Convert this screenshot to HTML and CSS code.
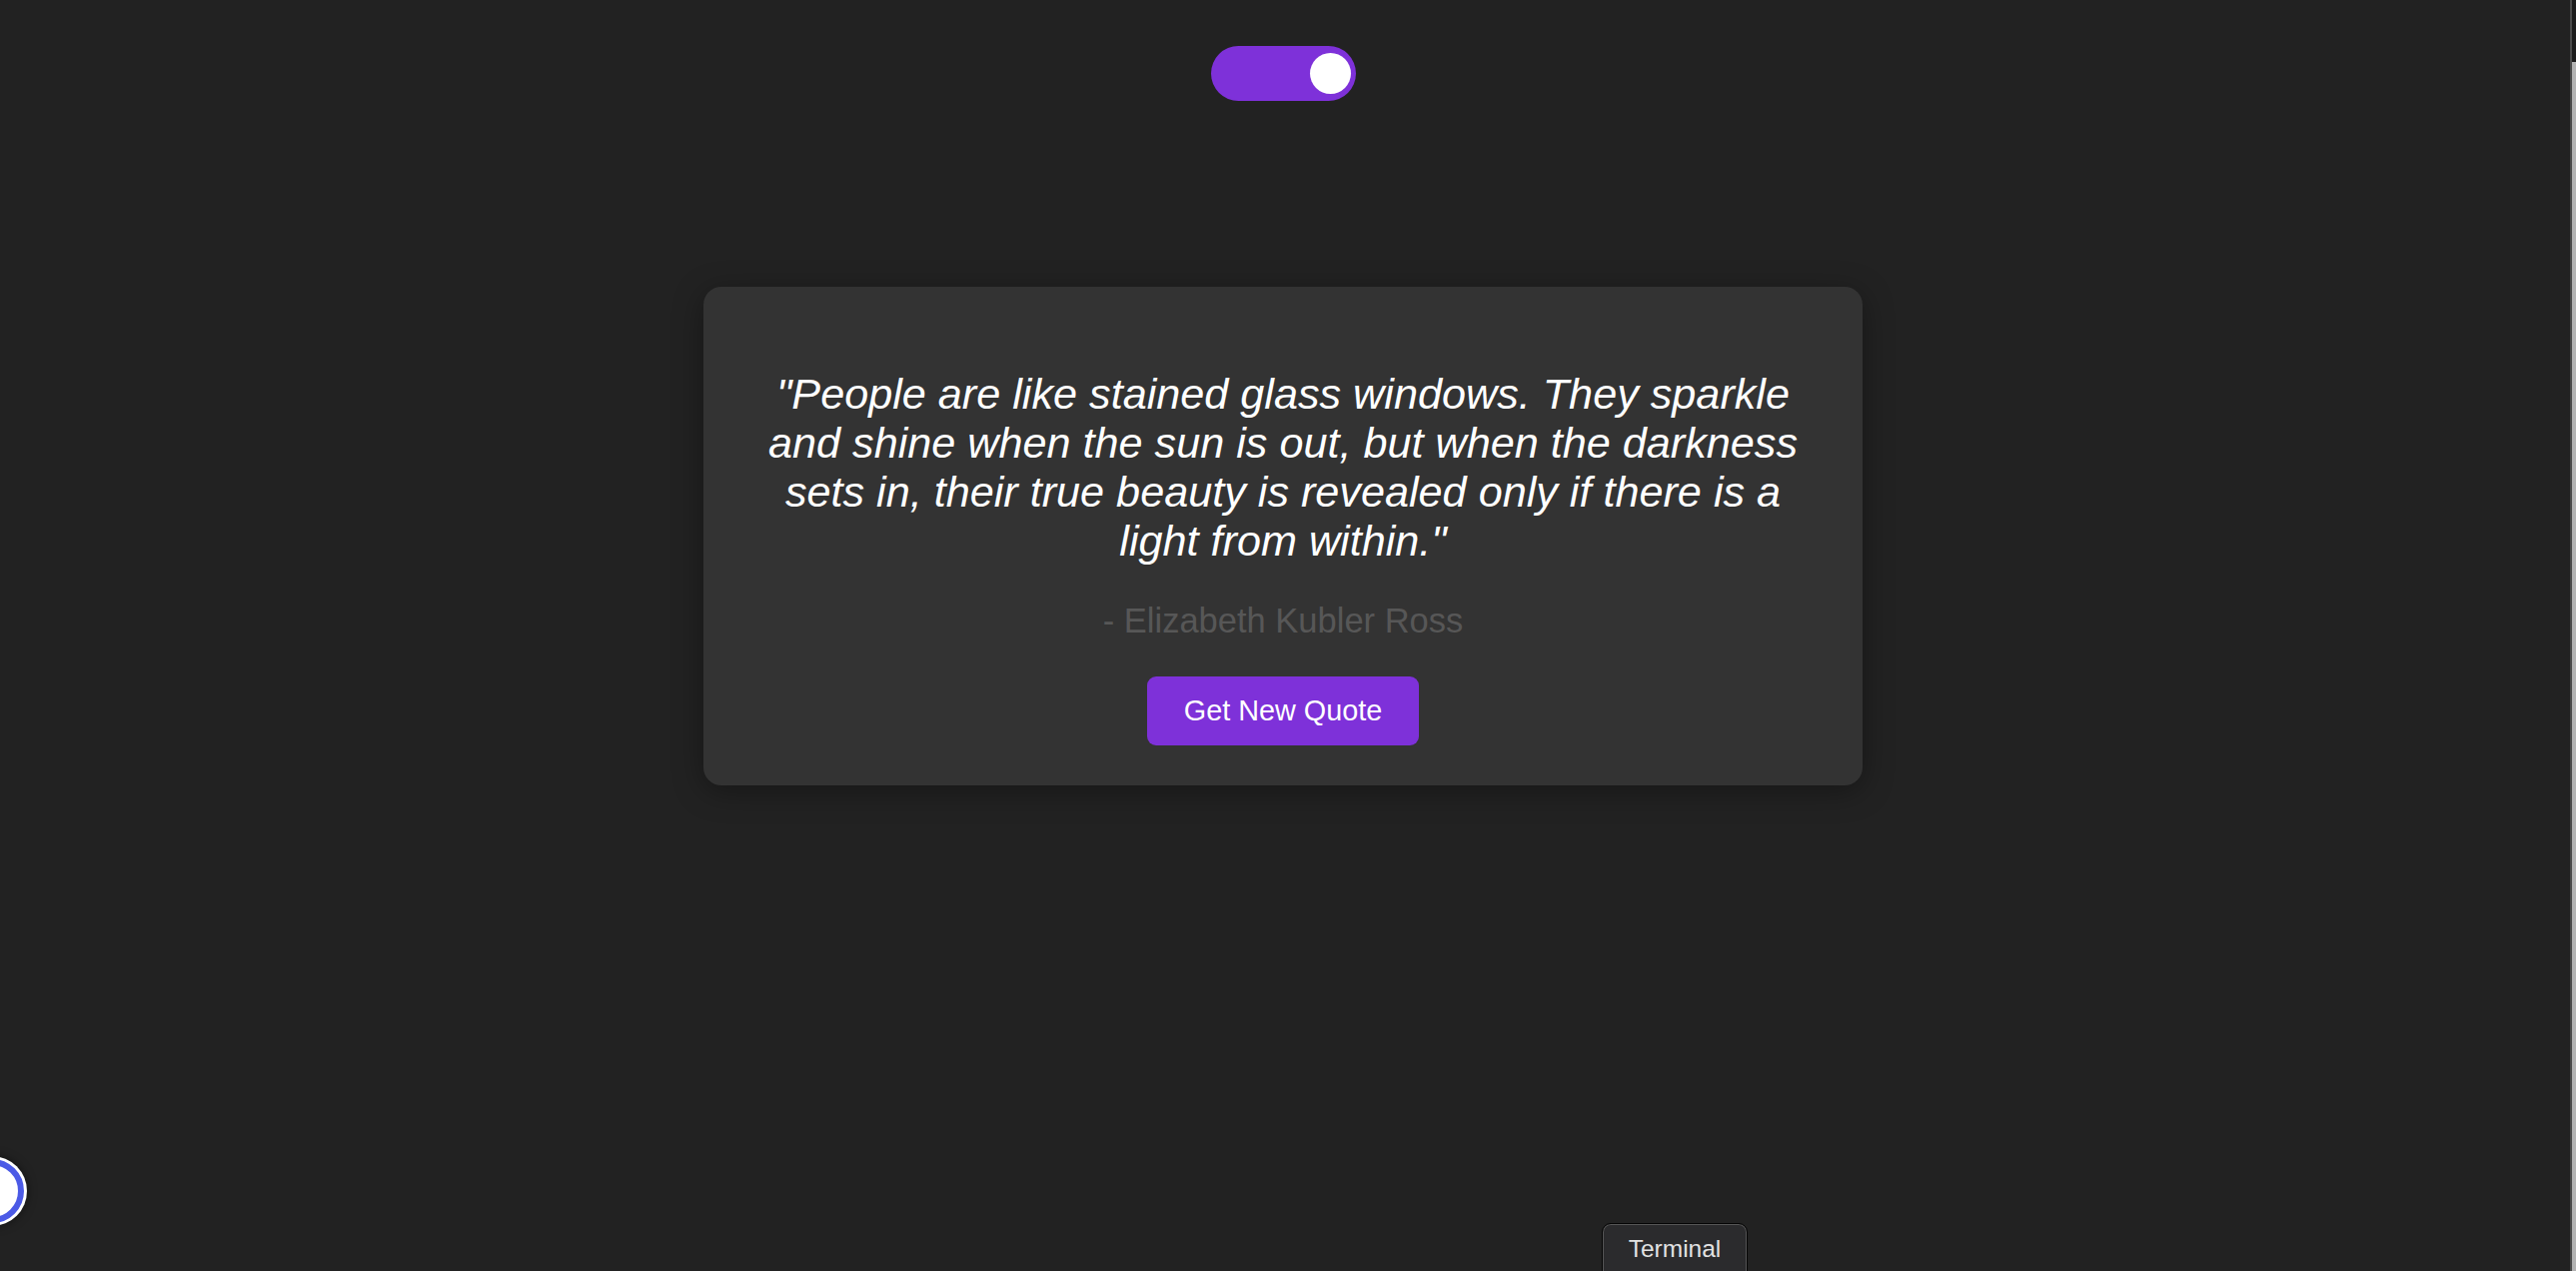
FILE: index.html
```html
<!DOCTYPE html>
<html lang="en">
<head>
<meta charset="utf-8">
<title>Quote Generator</title>
<link rel="stylesheet" href="styles.css">
</head>
<body>
<div class="page">
  <div class="toggle"><span class="knob"></span></div>
  <div class="card">
    <p class="quote">"People are like stained glass windows. They sparkle and shine when the sun is out, but when the darkness sets in, their true beauty is revealed only if there is a light from within."</p>
    <p class="author">- Elizabeth Kubler Ross</p>
    <button class="btn">Get New Quote</button>
  </div>
</div>
<div class="scrollbar"><div class="scroll-top"></div><div class="scroll-thumb"></div></div>
<div class="fab"></div>
<div class="tooltip">Terminal</div>
</body>
</html>
```
FILE: styles.css
```css
html, body {
  margin: 0;
  height: 100%;
}
body {
  background: #222222;
  font-family: "Liberation Sans", Arial, sans-serif;
  display: flex;
  overflow: hidden;
}
.page {
  flex: 1;
  display: flex;
  flex-direction: column;
  align-items: center;
}
.toggle {
  margin-top: 46px;
  width: 145px;
  height: 55px;
  border-radius: 28px;
  background: #7e31d9;
  display: flex;
  align-items: center;
  justify-content: flex-end;
  padding-right: 5px;
  box-sizing: border-box;
}
.knob {
  width: 41px;
  height: 41px;
  border-radius: 50%;
  background: #ffffff;
}
.card {
  margin-top: 186px;
  width: 1160px;
  box-sizing: border-box;
  padding: 83px 58px 40px;
  background: #333333;
  border-radius: 18px;
  box-shadow: 0 6px 30px rgba(0, 0, 0, 0.35);
  text-align: center;
}
.quote {
  margin: 0 0 36px;
  font-size: 43.2px;
  font-style: italic;
  color: #ffffff;
}
.author {
  margin: 0 0 36px;
  font-size: 34.5px;
  color: #575757;
}
.btn {
  font-family: "Liberation Sans", Arial, sans-serif;
  font-size: 28.8px;
  color: #ffffff;
  background: #7e31d9;
  border: none;
  border-radius: 9px;
  padding: 18px 37px;
}
.scrollbar {
  width: 10px;
  display: flex;
  flex-direction: column;
  background: linear-gradient(to right, #222 0 4px, #4a4a4a 4px 6px, transparent 6px);
}
.scroll-top {
  height: 62px;
  margin-left: 6px;
  background: #1b1b1b;
}
.scroll-thumb {
  flex: 1;
  margin-left: 6px;
  background: #b2b2b2;
}
.fab {
  position: fixed;
  left: -40px;
  top: 1160px;
  width: 52px;
  height: 52px;
  border-radius: 50%;
  background: #ffffff;
  border: 6px solid #4b5ae6;
  box-shadow: 0 0 0 3px #ffffff, 0 0 10px 3px rgba(0, 0, 0, 0.5);
}
.tooltip {
  position: fixed;
  left: 1603px;
  top: 1224px;
  width: 146px;
  height: 60px;
  box-sizing: border-box;
  padding-top: 11px;
  border: 1px solid #050505;
  box-shadow: inset 0 0 0 1px #565656;
  border-radius: 9px;
  background: #2b2b2d;
  color: #e2e2e2;
  font-family: "Liberation Sans", Arial, sans-serif;
  font-size: 24.5px;
  text-align: center;
}
```
